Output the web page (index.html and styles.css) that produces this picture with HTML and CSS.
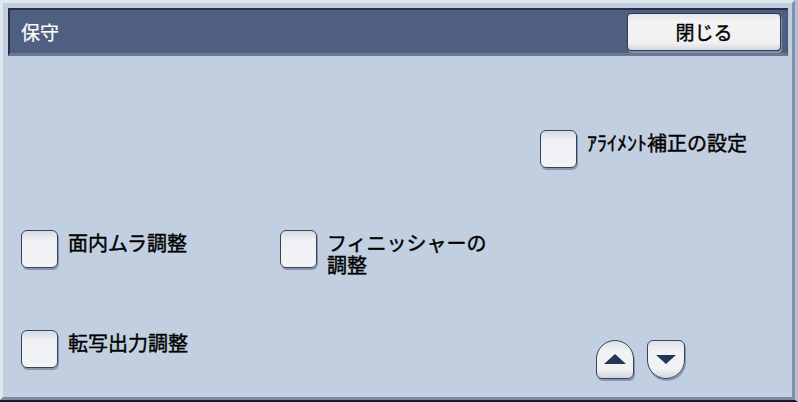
FILE: index.html
```html
<!DOCTYPE html>
<html lang="ja">
<head>
<meta charset="utf-8">
<title>保守</title>
<link rel="stylesheet" href="styles.css">
</head>
<body>
<div class="frame">
  <div class="screen">
    <div class="header">
      <div class="title">保守</div>
      <button class="close-btn">閉じる</button>
    </div>
    <div class="content">
      <div class="item pos-r1c3">
        <span class="check"></span>
        <span class="label">ｱﾗｲﾒﾝﾄ補正の設定</span>
      </div>
      <div class="item pos-r2c1">
        <span class="check"></span>
        <span class="label">面内ムラ調整</span>
      </div>
      <div class="item pos-r2c2">
        <span class="check"></span>
        <span class="label">フィニッシャーの調整</span>
      </div>
      <div class="item pos-r3c1">
        <span class="check"></span>
        <span class="label">転写出力調整</span>
      </div>
      <div class="arrows pos-r3c3">
        <span class="arrow up">
          <svg width="24" height="12" viewBox="0 0 24 12"><polygon points="12,1 23,11 1,11" fill="#263556"/></svg>
        </span>
        <span class="arrow down">
          <svg width="22" height="11" viewBox="0 0 22 11"><polygon points="1,1 21,1 11,10" fill="#263556"/></svg>
        </span>
      </div>
    </div>
  </div>
</div>
</body>
</html>
```
FILE: styles.css
```css
html, body {
  margin: 0;
  padding: 0;
  background: #000;
}
body {
  width: 798px;
  height: 402px;
  overflow: hidden;
  font-family: "Noto Sans CJK JP", "Noto Sans", sans-serif;
}
.frame {
  box-sizing: border-box;
  width: 798px;
  height: 402px;
  border-right: 3px solid #b3bfd2;
  border-bottom: 2px solid #161a26;
  background: #c2cfe0;
}
.screen {
  box-sizing: border-box;
  height: 100%;
  border-left: 3px solid #dfe7ef;
  border-top: 3px solid #dfe7ef;
  border-right: 3px solid #8591ab;
  border-bottom: 3px solid #7d89a4;
  padding: 5px 4px 0 5px;
}
.header {
  box-sizing: border-box;
  height: 48px;
  display: flex;
  align-items: center;
  justify-content: space-between;
  background: #4f5f80;
  border-top: 2px solid #27304a;
  border-left: 2px solid #27304a;
  border-bottom: 3px solid #6a7894;
  border-right: 1px solid #44526f;
  padding: 0 6px 0 11px;
}
.title {
  color: #fff;
  font-size: 19px;
  line-height: 22px;
  -webkit-text-stroke: 0.2px #fff;
}
.close-btn {
  box-sizing: border-box;
  width: 154px;
  height: 38px;
  margin-top: 1px;
  border: 1px solid #2e3850;
  border-radius: 4px;
  background: linear-gradient(#e4e6ea, #f3f3f4 20%, #f1f1f2 80%, #d5d8de);
  box-shadow: 1px 2px 0 #8590a6;
  font-family: inherit;
  font-size: 19px;
  line-height: 22px;
  color: #000;
  -webkit-text-stroke: 0.4px #000;
  padding: 0;
}
.content {
  display: grid;
  grid-template-columns: 259px 260px 1fr;
  grid-template-rows: 100px 100px 50px;
  padding: 74px 0 0 13px;
}
.pos-r1c3 { grid-row: 1; grid-column: 3; }
.pos-r2c1 { grid-row: 2; grid-column: 1; }
.pos-r2c2 { grid-row: 2; grid-column: 2; }
.pos-r3c1 { grid-row: 3; grid-column: 1; }
.pos-r3c3 { grid-row: 3; grid-column: 3; }
.item {
  display: flex;
  align-items: flex-start;
  gap: 10px;
}
.check {
  box-sizing: border-box;
  flex: none;
  width: 37px;
  height: 38px;
  border: 1px solid #364260;
  border-radius: 6px;
  background: linear-gradient(#d5dae3, #eef0f3 25%, #f3f4f6);
  box-shadow: 1px 2px 0 #8b95aa;
}
.label {
  font-size: 20px;
  line-height: 22px;
  color: #000;
  -webkit-text-stroke: 0.4px #000;
  max-width: 170px;
  margin-top: 2px;
}
.arrows {
  display: flex;
  gap: 13px;
  margin: 10px 0 0 56px;
}
.arrow {
  box-sizing: border-box;
  width: 38px;
  height: 39px;
  border: 1px solid #364260;
  background: linear-gradient(#dde1e8, #f2f3f5 30%, #f1f2f4 75%, #d2d6de);
  box-shadow: 1px 2px 0 #8b95aa;
  display: flex;
  justify-content: center;
}
.arrow.up {
  border-radius: 19px 19px 6px 6px;
  align-items: flex-end;
  padding-bottom: 13px;
}
.arrow.down {
  border-radius: 6px 6px 19px 19px;
  align-items: flex-start;
  padding-top: 13px;
}
.arrow svg { display: block; }
```
